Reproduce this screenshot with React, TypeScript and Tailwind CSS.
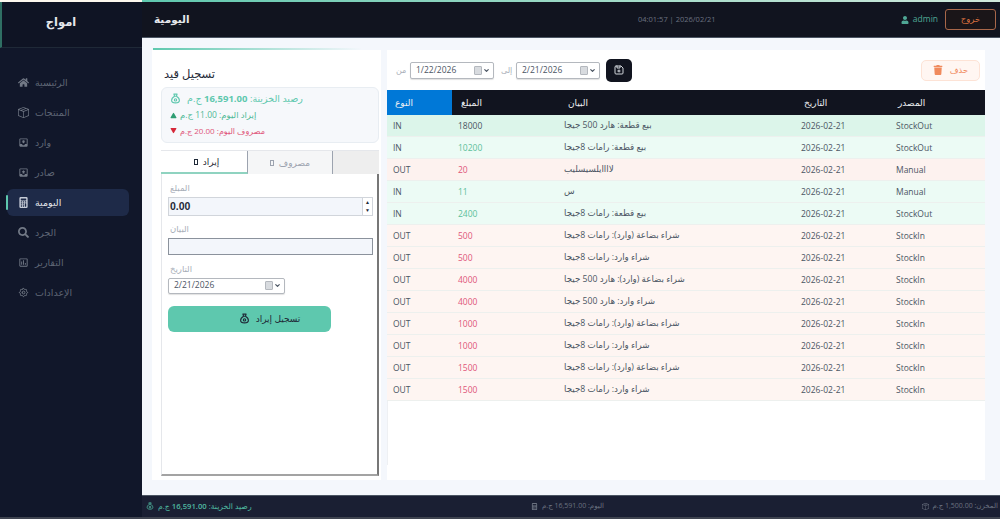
import type { ComponentType, ReactNode } from "react";
import { BsBoxSeam, BsCalculatorFill } from "react-icons/bs";
import { FaHome, FaSearch, FaTrash, FaUser } from "react-icons/fa";
import { MdMoveToInbox, MdOutbox, MdOutlineAssessment } from "react-icons/md";
import { TbDeviceFloppy, TbSettings } from "react-icons/tb";
import { ChevronDown, Triangle } from "lucide-react";

const font = "font-['Open_Sans','Noto_Sans','DejaVu_Sans',sans-serif]";

const navItems: { label: string; icon: ComponentType<{ size?: number; className?: string }>; active?: boolean }[] = [
  { label: "الرئيسية", icon: FaHome },
  { label: "المنتجات", icon: BsBoxSeam },
  { label: "وارد", icon: MdMoveToInbox },
  { label: "صادر", icon: MdOutbox },
  { label: "اليومية", icon: BsCalculatorFill, active: true },
  { label: "الجرد", icon: FaSearch },
  { label: "التقارير", icon: MdOutlineAssessment },
  { label: "الإعدادات", icon: TbSettings },
];

type Row = { type: "IN" | "OUT"; amount: string; desc: string; source: string; tone: string; amountTone?: string };

const rows: Row[] = [
  { type: "IN", amount: "18000", desc: "بيع قطعة: هارد 500 جيجا", source: "StockOut", tone: "bg-[#dcf5ea]", amountTone: "text-[#4b5563]" },
  { type: "IN", amount: "10200", desc: "بيع قطعة: رامات 8جيجا", source: "StockOut", tone: "bg-[#ecfbf5]" },
  { type: "OUT", amount: "20", desc: "لاااايلسيسليب", source: "Manual", tone: "bg-[#fdf2ef]" },
  { type: "IN", amount: "11", desc: "س", source: "Manual", tone: "bg-[#ecfbf5]" },
  { type: "IN", amount: "2400", desc: "بيع قطعة: رامات 8جيجا", source: "StockOut", tone: "bg-[#ecfbf5]" },
  { type: "OUT", amount: "500", desc: "شراء بضاعة (وارد): رامات 8جيجا", source: "StockIn", tone: "bg-[#fef5f2]" },
  { type: "OUT", amount: "500", desc: "شراء وارد: رامات 8جيجا", source: "StockIn", tone: "bg-[#fef5f2]" },
  { type: "OUT", amount: "4000", desc: "شراء بضاعة (وارد): هارد 500 جيجا", source: "StockIn", tone: "bg-[#fef5f2]" },
  { type: "OUT", amount: "4000", desc: "شراء وارد: هارد 500 جيجا", source: "StockIn", tone: "bg-[#fef5f2]" },
  { type: "OUT", amount: "1000", desc: "شراء بضاعة (وارد): رامات 8جيجا", source: "StockIn", tone: "bg-[#fef5f2]" },
  { type: "OUT", amount: "1000", desc: "شراء وارد: رامات 8جيجا", source: "StockIn", tone: "bg-[#fef5f2]" },
  { type: "OUT", amount: "1500", desc: "شراء بضاعة (وارد): رامات 8جيجا", source: "StockIn", tone: "bg-[#fef5f2]" },
  { type: "OUT", amount: "1500", desc: "شراء وارد: رامات 8جيجا", source: "StockIn", tone: "bg-[#fef5f2]" },
];

const MoneyBag = ({ size }: { size: number }) => (
  <svg width={size} height={size} viewBox="0 0 24 24" fill="none" stroke="currentColor" strokeWidth="2.4" strokeLinejoin="round">
    <path d="M8.5 2.5h7L14 7h-4z" />
    <path d="M10 7c-4 2-6.500 6-6.500 9.500 0 3 2.500 5 8.500 5s8.500-2 8.500-5C20.500 13 18 9 14 7" />
    <circle cx="12" cy="15" r="2.500" />
  </svg>
);

const Cols = ({ className, children }: { className: string; children: ReactNode }) => (
  <div className={`grid grid-cols-[65px_112px_237px_95px_89px] items-center ${className}`}>{children}</div>
);

const DatePicker = ({ value, className }: { value: string; className: string }) => (
  <div className={`flex items-center justify-between rounded-[2px] border border-[#b4b8be] bg-white pl-[5px] pr-[3px] text-[8.5px] text-[#4b5563] shadow-[0_1px_1px_rgba(0,0,0,0.12)] ${className}`}>
    <span>{value}</span>
    <span className="flex items-center">
      <span className="h-[9px] w-[8px] rounded-[1px] border border-[#b4b8be] bg-[#d8dbdf]" />
      <ChevronDown size={7} strokeWidth={4} className="ml-[1px] text-[#4b5563]" />
    </span>
  </div>
);

const Sidebar = () => (
  <aside className="flex w-[142px] shrink-0 flex-col bg-[#11172a]">
    <div className="flex h-[46px] items-center justify-center border-b border-l-2 border-b-[#1f2937] border-l-[#2f6f63] bg-[#0f1424] pb-[6px] pr-[22px] text-[11.5px] font-bold text-[#e5e7eb]">
      <span dir="rtl">امواج</span>
    </div>
    <nav className="mt-[21px] flex flex-col gap-[3px] pl-[7px] pr-[13px]">
      {navItems.map(({ label, icon: Icon, active }) => (
        <div
          key={label}
          className={`relative flex h-[27px] items-center gap-[6px] rounded-[6px] pl-[11px] text-[9.5px] ${active ? "bg-[#1e2a48] text-[#e5e7eb]" : "text-[#5f6675]"}`}
        >
          {active && <span className="absolute -left-[1px] top-[6px] h-[15px] w-[2px] rounded bg-[#5ec8ae]" />}
          <Icon size={11} className={active ? "text-[#c7cdd8]" : "text-[#727986]"} />
          <span dir="rtl" className="pt-[1px]">{label}</span>
        </div>
      ))}
    </nav>
  </aside>
);

const Header = () => (
  <header className="flex h-[36px] shrink-0 items-center border-b border-[#4b5563] bg-[#11141f] pl-[12px] pr-[4px]">
    <h1 dir="rtl" className="w-[200px] text-left text-[10.5px] font-bold text-[#e5e7eb]">اليومية</h1>
    <div className="ml-[284px] text-[7.500px] text-[#6b7280]">04:01:57 | 2026/02/21</div>
    <div className="ml-auto flex items-center gap-[7px]">
      <div className="flex items-center gap-[4px] text-[8.500px] text-[#4fa795]">
        <FaUser size={8} />
        admin
      </div>
      <button dir="rtl" className="h-[21px] w-[51px] rounded-[3px] border border-[#a8674a] bg-[#1a1518] text-[8.5px] text-[#d9703f]">خروج</button>
    </div>
  </header>
);

const EntryPanel = () => (
  <section className="flex w-[229px] shrink-0 flex-col bg-white pb-[4px] pl-[9px] pr-[2px]">
    <div className="mt-[-4px] h-[2px] w-[209px] -translate-x-[8px] translate-y-[2px] bg-gradient-to-r from-[#5ec8ae] to-transparent" />
    <h2 dir="rtl" className="ml-[3px] mt-[17px] self-start text-[11.5px] text-[#1f2937]">تسجيل قيد</h2>
    <div className="mt-[5px] flex h-[56px] flex-col justify-center gap-[3px] rounded-[6px] border border-[#e8edf2] bg-[#f6f8fb] pb-[2px] pl-[8px] text-[8px]">
      <div className="flex items-center gap-[6px] text-[9.5px] text-[#5ec8ae]">
        <MoneyBag size={11} />
        <span dir="rtl">رصيد الخزينة: <b className="font-bold">16,591.00</b> ج.م</span>
      </div>
      <div className="flex items-center gap-[3px] text-[8.5px] text-[#4fb896]">
        <Triangle size={7} fill="#2f9e73" stroke="none" />
        <span dir="rtl">إيراد اليوم: 11.00 ج.م</span>
      </div>
      <div className="flex items-center gap-[3px] text-[#e0567a]">
        <Triangle size={7} fill="#d62839" stroke="none" className="rotate-180" />
        <span dir="rtl">مصروف اليوم: 20.00 ج.م</span>
      </div>
    </div>
    <div className="mt-[7px] flex h-[24px] border-t border-[#e5e7eb] bg-[#eeeeee] text-[9px]">
      <div className="flex w-[87px] items-center justify-center gap-[5px] border-b-2 border-r border-b-[#8fd3c0] border-r-[#9ca3af] bg-white pl-[5px] text-[#1f2937]">
        <span className="h-[6px] w-[4px] border border-[#1f2937]" />
        <span dir="rtl">إيراد</span>
      </div>
      <div className="flex w-[85px] items-center justify-center gap-[5px] border-r border-r-[#9ca3af] bg-[#f5f6f7] text-[#9ca3af]">
        <span className="h-[6px] w-[4px] border border-[#9ca3af]" />
        <span dir="rtl">مصروف</span>
      </div>
    </div>
    <div className="flex flex-1 flex-col border-b-2 border-l border-r-2 border-b-[#a3a3a3] border-l-[#e5e7eb] border-r-[#777777] pl-[6px] pr-[4px] pt-[8px]">
      <label dir="rtl" className="self-start pl-[2px] text-[8.5px] text-[#a8aeb8]">المبلغ</label>
      <div className="mt-[2px] flex h-[19px] items-center justify-between border border-[#d1d5db] bg-[#f3f6fb] pl-[1px] font-['Liberation_Sans',sans-serif] text-[10.5px] font-bold text-[#1f2937]">
        0.00
        <span className="flex h-full w-[10px] flex-col border-l border-[#d1d5db] bg-white text-center text-[5px] leading-[8px] text-[#1f2937]">
          <span>▲</span>
          <span>▼</span>
        </span>
      </div>
      <label dir="rtl" className="mt-[7px] self-start pl-[2px] text-[8.5px] text-[#a8aeb8]">البيان</label>
      <div className="mt-[2px] h-[17px] border border-[#8b929c] bg-[#f3f6fb]" />
      <label dir="rtl" className="mt-[8px] self-start pl-[2px] text-[8.5px] text-[#a8aeb8]">التاريخ</label>
      <DatePicker value="2/21/2026" className="mt-[2px] h-[16px] w-[117px]" />
      <button className="mt-[12px] flex h-[26px] w-[163px] items-center justify-center gap-[6px] rounded-[6px] bg-[#5ec8ae] pl-[40px] text-[9px] text-[#1f2937]">
        <MoneyBag size={11} />
        <span dir="rtl">تسجيل إيراد</span>
      </button>
    </div>
  </section>
);

const JournalPanel = () => (
  <section className="ml-[6px] flex w-[598px] shrink-0 flex-col bg-white pb-[15px]">
    <div className="flex h-[40px] items-center pl-[9px] pr-[5px]">
      <span dir="rtl" className="w-[14px] text-left text-[8px] text-[#a8aeb8]">من</span>
      <DatePicker value="1/22/2026" className="h-[17px] w-[84px]" />
      <span dir="rtl" className="ml-[7px] w-[15px] text-left text-[8px] text-[#a8aeb8]">إلى</span>
      <DatePicker value="2/21/2026" className="h-[17px] w-[84px]" />
      <button className="ml-[6px] flex h-[23px] w-[26px] items-center justify-center rounded-[5px] bg-[#11141f] text-[#d1d5db]">
        <TbDeviceFloppy size={12} />
      </button>
      <button dir="rtl" className="ml-auto flex h-[21px] w-[59px] items-center justify-center gap-[7px] rounded-[5px] border border-[#fde3d6] bg-[#fff6f2] text-[8.5px] text-[#f08a5d]">
        حذف
        <FaTrash size={10} />
      </button>
    </div>
    <Cols className="h-[25px] bg-[#11141f] text-[9px] text-[#eef0f3]">
      <div className="flex h-full items-center bg-[#0078d7] pl-[8px]"><span dir="rtl">النوع</span></div>
      <div className="pl-[9px]"><span dir="rtl">المبلغ</span></div>
      <div className="pl-[4px]"><span dir="rtl">البيان</span></div>
      <div className="pl-[3px]"><span dir="rtl">التاريخ</span></div>
      <div className="pl-[2px]"><span dir="rtl">المصدر</span></div>
    </Cols>
    {rows.map((row, i) => (
      <Cols key={i} className={`h-[22px] border-b border-[#edf0ee] pt-[1px] text-[8.5px] text-[#4b5563] ${row.tone}`}>
        <div className="pl-[6px]">{row.type}</div>
        <div className={`pl-[6px] ${row.amountTone ?? (row.type === "IN" ? "text-[#5cc09a]" : "text-[#e0567a]")}`}>{row.amount}</div>
        <div dir="rtl" className="text-left text-[8.7px]">{row.desc}</div>
        <div>2026-02-21</div>
        <div>{row.source}</div>
      </Cols>
    ))}
    <div className="flex-1 border-l border-[#eef0f3]" />
  </section>
);

const Footer = () => (
  <footer className="flex h-[22px] shrink-0 items-center border-t border-[#4b5563] bg-[#1a1f33] pl-[4px] pr-[2px] text-[7px] text-[#6b7280]">
    <div className="flex w-[385px] items-center gap-[4px] text-[7.7px] text-[#4fb8a0]">
      <MoneyBag size={8} />
      <span dir="rtl">رصيد الخزينة: <b className="font-semibold">16,591.00</b> ج.م</span>
    </div>
    <div className="flex items-center gap-[4px]">
      <BsCalculatorFill size={7} />
      <span dir="rtl">اليوم: 16,591.00 ج.م</span>
    </div>
    <div className="ml-auto flex items-center gap-[4px]">
      <BsBoxSeam size={7} />
      <span dir="rtl">المخزن: 1,500.00 ج.م</span>
    </div>
  </footer>
);

export default function App() {
  return (
    <div className={`flex h-[519px] w-[1000px] flex-col overflow-hidden bg-[#3f4450] ${font}`}>
      <div className="flex h-[2px] shrink-0">
        <div className="w-[142px] bg-[#fdf8ef]" />
        <div className="flex-1 bg-gradient-to-r from-[#5ec8ae] to-[#cfe9dc]" />
      </div>
      <div className="flex h-[515px] shrink-0">
        <Sidebar />
        <div className="flex min-w-0 flex-1 flex-col">
          <Header />
          <main className="flex min-h-0 flex-1 bg-[#f4f7fc] pb-[15px] pl-[10px] pt-[12px]">
            <EntryPanel />
            <JournalPanel />
          </main>
          <Footer />
        </div>
      </div>
    </div>
  );
}
